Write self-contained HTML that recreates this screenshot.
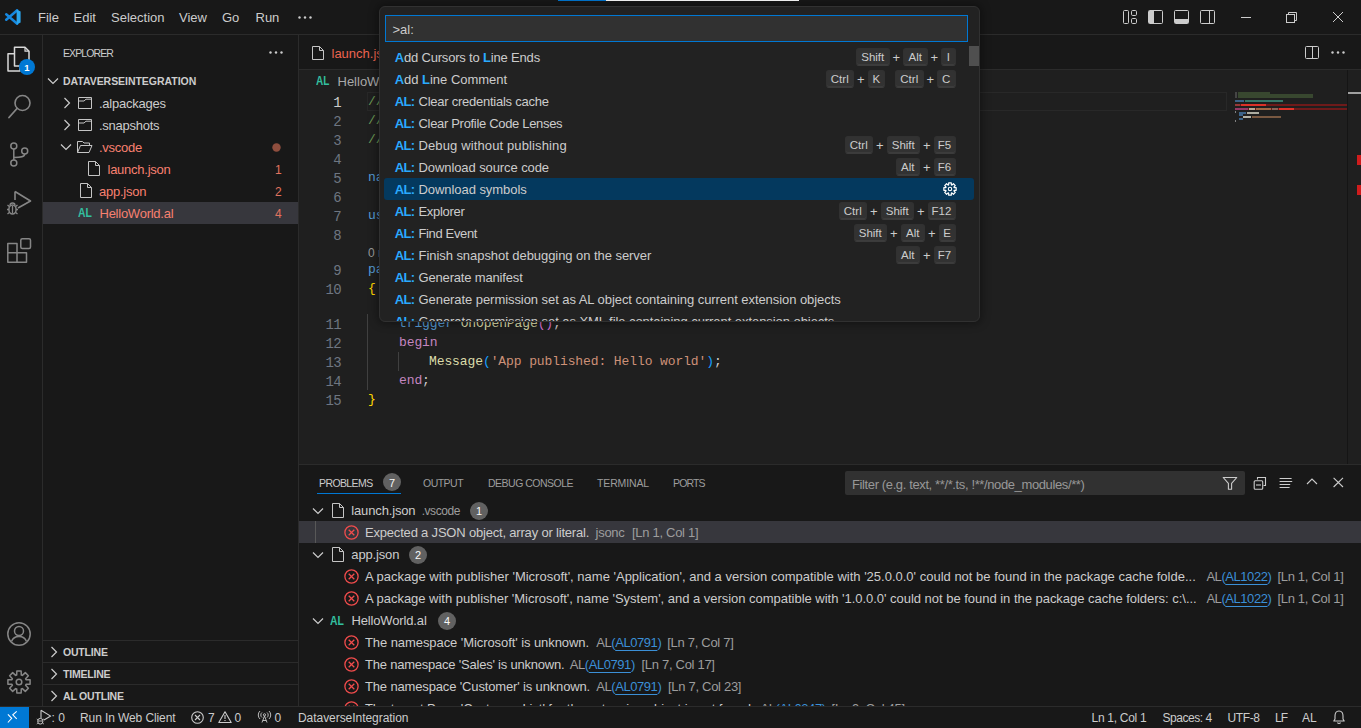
<!DOCTYPE html>
<html><head><meta charset="utf-8">
<style>
*{box-sizing:border-box;margin:0;padding:0}
html,body{width:1361px;height:728px;overflow:hidden;background:#181818;font-family:"Liberation Sans",sans-serif;color:#cccccc;font-size:13px;position:relative}
.a{position:absolute}
.t{position:absolute;white-space:pre;line-height:1}
svg{position:absolute;overflow:visible}
b{font-weight:700}
</style></head><body>
<div class="a" style="left:0px;top:0px;width:1361px;height:34px;background:#181818;"></div>
<div class="a" style="left:0px;top:34px;width:1361px;height:1px;background:#2b2b2b;"></div>
<div class="a" style="left:558px;top:0px;width:48px;height:1px;background:#0078d4;"></div>
<div class="a" style="left:606px;top:0px;width:193px;height:1px;background:#ffffff;"></div>
<svg style="left:5px;top:9px;" width="17" height="17" viewBox="0 0 17 17"><path d="M12.2 1.2 L1.2 10.8 M12.2 14.8 L1.2 5.2" stroke="#1688e0" stroke-width="2.5" stroke-linecap="round"/>
<path d="M11.6 0.4 L15.6 2.4 V13.6 L11.6 15.6 Z" fill="#2aa6ee"/></svg>
<div class="t" style="left:38px;top:11.0px;font-size:13px;color:#cccccc;font-weight:400;font-family:'Liberation Sans';">File</div>
<div class="t" style="left:73.5px;top:11.0px;font-size:13px;color:#cccccc;font-weight:400;font-family:'Liberation Sans';">Edit</div>
<div class="t" style="left:111px;top:11.0px;font-size:13px;color:#cccccc;font-weight:400;font-family:'Liberation Sans';">Selection</div>
<div class="t" style="left:179px;top:11.0px;font-size:13px;color:#cccccc;font-weight:400;font-family:'Liberation Sans';">View</div>
<div class="t" style="left:222px;top:11.0px;font-size:13px;color:#cccccc;font-weight:400;font-family:'Liberation Sans';">Go</div>
<div class="t" style="left:255.5px;top:11.0px;font-size:13px;color:#cccccc;font-weight:400;font-family:'Liberation Sans';">Run</div>
<svg style="left:298px;top:16px;" width="14" height="3" viewBox="0 0 14 3"><circle cx="1.5" cy="1.5" r="1.2" fill="#cccccc"/><circle cx="7" cy="1.5" r="1.2" fill="#cccccc"/><circle cx="12.5" cy="1.5" r="1.2" fill="#cccccc"/></svg>
<svg style="left:1123px;top:10px;" width="16" height="16" viewBox="0 0 16 16"><rect x="0.5" y="0.5" width="5" height="13" rx="1" fill="none" stroke="#cccccc"/><rect x="8.5" y="0.5" width="5" height="5" rx="1.2" fill="none" stroke="#cccccc"/><rect x="8.5" y="8.5" width="5" height="5" rx="1.2" fill="none" stroke="#cccccc"/></svg>
<svg style="left:1148px;top:10px;" width="16" height="16" viewBox="0 0 16 16"><rect x="0.5" y="0.5" width="14" height="13" rx="1" fill="none" stroke="#cccccc"/><rect x="1" y="1" width="5" height="12" fill="#cccccc"/></svg>
<svg style="left:1174px;top:10px;" width="16" height="16" viewBox="0 0 16 16"><rect x="0.5" y="0.5" width="14" height="13" rx="1" fill="none" stroke="#cccccc"/><rect x="1" y="9" width="13" height="4" fill="#cccccc"/></svg>
<svg style="left:1200px;top:10px;" width="16" height="16" viewBox="0 0 16 16"><rect x="0.5" y="0.5" width="14" height="13" rx="1" fill="none" stroke="#cccccc"/><line x1="9.5" y1="1" x2="9.5" y2="13" stroke="#cccccc"/></svg>
<div class="a" style="left:1241px;top:17px;width:10px;height:1px;background:#cccccc;"></div>
<svg style="left:1286px;top:12px;" width="11" height="11" viewBox="0 0 11 11"><rect x="0.5" y="2.5" width="8" height="8" fill="none" stroke="#cccccc"/><path d="M2.5 2.5 V0.5 H10.5 V8.5 H8.5" fill="none" stroke="#cccccc"/></svg>
<svg style="left:1333px;top:12px;" width="10" height="10" viewBox="0 0 10 10"><path d="M0 0 L10 10 M10 0 L0 10" stroke="#cccccc" stroke-width="1"/></svg>
<div class="a" style="left:42px;top:35px;width:1px;height:671px;background:#2b2b2b;"></div>
<svg style="left:7px;top:46px;" width="24" height="27" viewBox="0 0 24 27"><path d="M7.5 1.2 H18 L22 5.2 V20 H7.5 Z" fill="none" stroke="#d7d7d7" stroke-width="1.5" stroke-linejoin="round"/><path d="M18 1.2 V5.2 H22" fill="none" stroke="#d7d7d7" stroke-width="1.2"/><path d="M7.5 7.8 H1 V25 H13 V20" fill="none" stroke="#d7d7d7" stroke-width="1.5" stroke-linejoin="round"/></svg>
<svg style="left:19px;top:59px;" width="16" height="16" viewBox="0 0 16 16"><circle cx="8" cy="8" r="8" fill="#0078d4"/></svg>
<div class="t" style="left:24.2px;top:62.96px;font-size:9.5px;color:#ffffff;font-weight:700;font-family:'Liberation Sans';">1</div>
<svg style="left:8px;top:94px;" width="24" height="25" viewBox="0 0 24 25"><circle cx="14.5" cy="9" r="7.5" fill="none" stroke="#868686" stroke-width="1.6"/><path d="M9 14.5 L1 23.5" stroke="#868686" stroke-width="1.8" stroke-linecap="round"/></svg>
<svg style="left:9px;top:141px;" width="20" height="26" viewBox="0 0 20 26"><circle cx="4.8" cy="5" r="3" fill="none" stroke="#868686" stroke-width="1.5"/><circle cx="4.8" cy="22" r="3" fill="none" stroke="#868686" stroke-width="1.5"/><circle cx="15.7" cy="10" r="3" fill="none" stroke="#868686" stroke-width="1.5"/><path d="M4.8 8 V19 M15.7 13 C15.7 16 12 16.5 5 16.5" fill="none" stroke="#868686" stroke-width="1.5"/></svg>
<svg style="left:6px;top:190px;" width="26" height="27" viewBox="0 0 26 27"><path d="M9 1.5 V10 M9 1.5 L24.5 11 L12 18" fill="none" stroke="#868686" stroke-width="1.6" stroke-linejoin="round"/><ellipse cx="6.5" cy="19.5" rx="3.6" ry="4.5" fill="none" stroke="#868686" stroke-width="1.5"/><path d="M4 15.5 A2.5 2.5 0 0 1 9 15.5 M1 19.5 H3 M10 19.5 H12 M1.5 15 L3.3 16.5 M11.5 15 L9.7 16.5 M1.5 24 L3.3 22.5 M11.5 24 L9.7 22.5 M6.5 16 V23.5" fill="none" stroke="#868686" stroke-width="1.3"/></svg>
<svg style="left:7px;top:238px;" width="25" height="25" viewBox="0 0 25 25"><path d="M0.8 5.5 H10 V14.8 H19.5 V24.2 H0.8 Z M0.8 14.8 H10 V24.2" fill="none" stroke="#868686" stroke-width="1.5" stroke-linejoin="round"/><rect x="13.8" y="0.8" width="9.7" height="9.7" rx="1.5" fill="none" stroke="#868686" stroke-width="1.5"/></svg>
<svg style="left:7px;top:622px;" width="24" height="24" viewBox="0 0 24 24"><circle cx="12" cy="12" r="11.2" fill="none" stroke="#868686" stroke-width="1.5"/><circle cx="12" cy="9" r="4.5" fill="none" stroke="#868686" stroke-width="1.5"/><path d="M4.5 19.5 C6 15.5 9 14.5 12 14.5 C15 14.5 18 15.5 19.5 19.5" fill="none" stroke="#868686" stroke-width="1.5"/></svg>
<svg style="left:7px;top:670px;" width="24" height="24" viewBox="0 0 24 24"><path d="M19.04 9.71 L23.09 9.84 L23.09 14.16 L19.04 14.29 L18.59 15.36 L21.37 18.32 L18.32 21.37 L15.36 18.59 L14.29 19.04 L14.16 23.09 L9.84 23.09 L9.71 19.04 L8.64 18.59 L5.68 21.37 L2.63 18.32 L5.41 15.36 L4.96 14.29 L0.91 14.16 L0.91 9.84 L4.96 9.71 L5.41 8.64 L2.63 5.68 L5.68 2.63 L8.64 5.41 L9.71 4.96 L9.84 0.91 L14.16 0.91 L14.29 4.96 L15.36 5.41 L18.32 2.63 L21.37 5.68 L18.59 8.64 Z" fill="none" stroke="#868686" stroke-width="1.5" stroke-linejoin="round"/><circle cx="12" cy="12" r="2.8" fill="none" stroke="#868686" stroke-width="1.5"/></svg>
<div class="a" style="left:298px;top:35px;width:1px;height:671px;background:#2b2b2b;"></div>
<div class="t" style="left:63px;top:48.11px;font-size:10.5px;color:#cccccc;font-weight:400;font-family:'Liberation Sans';letter-spacing:-0.9px">EXPLORER</div>
<svg style="left:269px;top:51px;" width="14" height="3" viewBox="0 0 14 3"><circle cx="1.5" cy="1.5" r="1.2" fill="#cccccc"/><circle cx="7" cy="1.5" r="1.2" fill="#cccccc"/><circle cx="12.5" cy="1.5" r="1.2" fill="#cccccc"/></svg>
<svg style="left:47px;top:77px;" width="12" height="8" viewBox="0 0 12 8"><path d="M1 1.5 L6 6.5 L11 1.5" fill="none" stroke="#cccccc" stroke-width="1.2"/></svg>
<div class="t" style="left:63px;top:76.11px;font-size:10.5px;color:#cccccc;font-weight:700;font-family:'Liberation Sans';letter-spacing:-0.04px">DATAVERSEINTEGRATION</div>
<div class="a" style="left:43px;top:202px;width:255px;height:22px;background:#37373d;"></div>
<svg style="left:63px;top:97px;" width="8" height="12" viewBox="0 0 8 12"><path d="M1.5 1 L6.5 6 L1.5 11" fill="none" stroke="#cccccc" stroke-width="1.2"/></svg>
<svg style="left:78px;top:96px;" width="15" height="14" viewBox="0 0 15 14"><path d="M0.5 1.5 H13.5 V12.5 H0.5 Z M0.5 5 H6 L8 3.2 H13.5" fill="none" stroke="#c5c5c5" stroke-width="1" stroke-linejoin="round"/></svg>
<div class="t" style="left:99px;top:97.0px;font-size:13px;color:#cccccc;font-weight:400;font-family:'Liberation Sans';letter-spacing:-0.25px">.alpackages</div>
<svg style="left:63px;top:119px;" width="8" height="12" viewBox="0 0 8 12"><path d="M1.5 1 L6.5 6 L1.5 11" fill="none" stroke="#cccccc" stroke-width="1.2"/></svg>
<svg style="left:78px;top:118px;" width="15" height="14" viewBox="0 0 15 14"><path d="M0.5 1.5 H13.5 V12.5 H0.5 Z M0.5 5 H6 L8 3.2 H13.5" fill="none" stroke="#c5c5c5" stroke-width="1" stroke-linejoin="round"/></svg>
<div class="t" style="left:99px;top:119.0px;font-size:13px;color:#cccccc;font-weight:400;font-family:'Liberation Sans';letter-spacing:-0.25px">.snapshots</div>
<svg style="left:60px;top:143px;" width="12" height="8" viewBox="0 0 12 8"><path d="M1 1.5 L6 6.5 L11 1.5" fill="none" stroke="#cccccc" stroke-width="1.2"/></svg>
<svg style="left:77px;top:140px;" width="16" height="14" viewBox="0 0 16 14"><path d="M0.5 12.5 V1.5 H5.5 L7 3 H12.5 V5.5 M0.5 12.5 H12 L15 5.5 H3.5 L0.5 12.5" fill="none" stroke="#c5c5c5" stroke-width="1" stroke-linejoin="round"/></svg>
<div class="t" style="left:99px;top:141.0px;font-size:13px;color:#f88070;font-weight:400;font-family:'Liberation Sans';letter-spacing:-0.25px">.vscode</div>
<svg style="left:272px;top:143px;" width="10" height="10" viewBox="0 0 10 10"><circle cx="4.5" cy="4.5" r="4.2" fill="#8f4e3e"/></svg>
<svg style="left:88px;top:161px;" width="12" height="15" viewBox="0 0 12 15"><path d="M0.5 0.5 H7.5 L11.5 4.5 V14.5 H0.5 Z M7.5 0.5 V4.5 H11.5" fill="none" stroke="#c5c5c5" stroke-width="1" stroke-linejoin="round"/></svg>
<div class="t" style="left:107.5px;top:163.0px;font-size:13px;color:#f88070;font-weight:400;font-family:'Liberation Sans';letter-spacing:-0.25px">launch.json</div>
<div class="t" style="left:275px;top:163.84px;font-size:12px;color:#e0735f;font-weight:400;font-family:'Liberation Sans';">1</div>
<svg style="left:79.5px;top:183px;" width="12" height="15" viewBox="0 0 12 15"><path d="M0.5 0.5 H7.5 L11.5 4.5 V14.5 H0.5 Z M7.5 0.5 V4.5 H11.5" fill="none" stroke="#c5c5c5" stroke-width="1" stroke-linejoin="round"/></svg>
<div class="t" style="left:99px;top:185.0px;font-size:13px;color:#f88070;font-weight:400;font-family:'Liberation Sans';letter-spacing:-0.25px">app.json</div>
<div class="t" style="left:275px;top:185.84px;font-size:12px;color:#e0735f;font-weight:400;font-family:'Liberation Sans';">2</div>
<div class="t" style="left:78px;top:206.0px;font-size:13px;color:#33c0a0;font-weight:700;font-family:'Liberation Sans';transform:scaleX(0.8);transform-origin:0 0">AL</div>
<div class="t" style="left:99.5px;top:207.0px;font-size:13px;color:#f88070;font-weight:400;font-family:'Liberation Sans';letter-spacing:-0.25px">HelloWorld.al</div>
<div class="t" style="left:275px;top:207.84px;font-size:12px;color:#e0735f;font-weight:400;font-family:'Liberation Sans';">4</div>
<div class="a" style="left:43px;top:640px;width:255px;height:1px;background:#2b2b2b;"></div>
<div class="a" style="left:43px;top:662px;width:255px;height:1px;background:#2b2b2b;"></div>
<div class="a" style="left:43px;top:684px;width:255px;height:1px;background:#2b2b2b;"></div>
<svg style="left:50px;top:646px;" width="8" height="12" viewBox="0 0 8 12"><path d="M1.5 1 L6.5 6 L1.5 11" fill="none" stroke="#cccccc" stroke-width="1.2"/></svg>
<div class="t" style="left:63px;top:647.11px;font-size:10.5px;color:#cccccc;font-weight:700;font-family:'Liberation Sans';letter-spacing:-0.2px">OUTLINE</div>
<svg style="left:50px;top:668px;" width="8" height="12" viewBox="0 0 8 12"><path d="M1.5 1 L6.5 6 L1.5 11" fill="none" stroke="#cccccc" stroke-width="1.2"/></svg>
<div class="t" style="left:63px;top:669.11px;font-size:10.5px;color:#cccccc;font-weight:700;font-family:'Liberation Sans';letter-spacing:-0.2px">TIMELINE</div>
<svg style="left:50px;top:690px;" width="8" height="12" viewBox="0 0 8 12"><path d="M1.5 1 L6.5 6 L1.5 11" fill="none" stroke="#cccccc" stroke-width="1.2"/></svg>
<div class="t" style="left:63px;top:691.11px;font-size:10.5px;color:#cccccc;font-weight:700;font-family:'Liberation Sans';letter-spacing:-0.2px">AL OUTLINE</div>
<div class="a" style="left:299px;top:35px;width:1062px;height:34px;background:#181818;"></div>
<div class="a" style="left:299px;top:69px;width:1062px;height:1px;background:#2b2b2b;"></div>
<div class="a" style="left:299px;top:70px;width:1062px;height:394px;background:#1f1f1f;"></div>
<svg style="left:312px;top:46px;" width="12" height="15" viewBox="0 0 12 15"><path d="M0.5 0.5 H7.5 L11.5 4.5 V13.5 H0.5 Z M7.5 0.5 V4.5 H11.5" fill="none" stroke="#c5c5c5" stroke-width="1" stroke-linejoin="round"/></svg>
<div class="t" style="left:331.5px;top:47.0px;font-size:13px;color:#ec6450;font-weight:400;font-family:'Liberation Sans';">launch.json</div>
<div class="a" style="left:478px;top:35px;width:1px;height:34px;background:#2b2b2b;"></div>
<svg style="left:1305px;top:46px;" width="15" height="14" viewBox="0 0 15 14"><rect x="0.5" y="0.5" width="13" height="12" rx="1" fill="none" stroke="#cccccc"/><line x1="7.5" y1="1" x2="7.5" y2="12" stroke="#cccccc"/></svg>
<svg style="left:1331px;top:51px;" width="14" height="3" viewBox="0 0 14 3"><circle cx="1.5" cy="1.5" r="1.2" fill="#cccccc"/><circle cx="7" cy="1.5" r="1.2" fill="#cccccc"/><circle cx="12.5" cy="1.5" r="1.2" fill="#cccccc"/></svg>
<div class="t" style="left:316px;top:75.42px;font-size:12.5px;color:#33c0a0;font-weight:700;font-family:'Liberation Sans';transform:scaleX(0.8);transform-origin:0 0">AL</div>
<div class="t" style="left:337.5px;top:75.0px;font-size:13px;color:#a9a9a9;font-weight:400;font-family:'Liberation Sans';">HelloWorld.al</div>
<div class="a" style="left:367px;top:92px;width:860px;height:19px;background:transparent;border:1px solid #282828"></div>
<div class="t" style="left:333.3px;top:95.63px;font-size:14px;color:#cccccc;font-weight:400;font-family:'Liberation Mono';letter-spacing:-0.7px">1</div>
<div class="t" style="left:333.3px;top:114.63px;font-size:14px;color:#6e7681;font-weight:400;font-family:'Liberation Mono';letter-spacing:-0.7px">2</div>
<div class="t" style="left:333.3px;top:133.63px;font-size:14px;color:#6e7681;font-weight:400;font-family:'Liberation Mono';letter-spacing:-0.7px">3</div>
<div class="t" style="left:333.3px;top:152.63px;font-size:14px;color:#6e7681;font-weight:400;font-family:'Liberation Mono';letter-spacing:-0.7px">4</div>
<div class="t" style="left:333.3px;top:171.63px;font-size:14px;color:#6e7681;font-weight:400;font-family:'Liberation Mono';letter-spacing:-0.7px">5</div>
<div class="t" style="left:333.3px;top:190.63px;font-size:14px;color:#6e7681;font-weight:400;font-family:'Liberation Mono';letter-spacing:-0.7px">6</div>
<div class="t" style="left:333.3px;top:209.63px;font-size:14px;color:#6e7681;font-weight:400;font-family:'Liberation Mono';letter-spacing:-0.7px">7</div>
<div class="t" style="left:333.3px;top:228.63px;font-size:14px;color:#6e7681;font-weight:400;font-family:'Liberation Mono';letter-spacing:-0.7px">8</div>
<div class="t" style="left:333.3px;top:263.63px;font-size:14px;color:#6e7681;font-weight:400;font-family:'Liberation Mono';letter-spacing:-0.7px">9</div>
<div class="t" style="left:325.6px;top:282.63px;font-size:14px;color:#6e7681;font-weight:400;font-family:'Liberation Mono';letter-spacing:-0.7px">10</div>
<div class="t" style="left:325.6px;top:317.63px;font-size:14px;color:#6e7681;font-weight:400;font-family:'Liberation Mono';letter-spacing:-0.7px">11</div>
<div class="t" style="left:325.6px;top:336.63px;font-size:14px;color:#6e7681;font-weight:400;font-family:'Liberation Mono';letter-spacing:-0.7px">12</div>
<div class="t" style="left:325.6px;top:355.63px;font-size:14px;color:#6e7681;font-weight:400;font-family:'Liberation Mono';letter-spacing:-0.7px">13</div>
<div class="t" style="left:325.6px;top:374.63px;font-size:14px;color:#6e7681;font-weight:400;font-family:'Liberation Mono';letter-spacing:-0.7px">14</div>
<div class="t" style="left:325.6px;top:393.63px;font-size:14px;color:#6e7681;font-weight:400;font-family:'Liberation Mono';letter-spacing:-0.7px">15</div>
<div class="t" style="left:368px;top:95.36px;font-family:'Liberation Mono';font-size:13px;letter-spacing:-0.1px"><span style="color:#6a9955">// Welcome to your new AL extension.</span></div>
<div class="t" style="left:368px;top:114.36px;font-family:'Liberation Mono';font-size:13px;letter-spacing:-0.1px"><span style="color:#6a9955">// Remember that object names and IDs should be unique across all extensions.</span></div>
<div class="t" style="left:368px;top:133.36px;font-family:'Liberation Mono';font-size:13px;letter-spacing:-0.1px"><span style="color:#6a9955">// AL snippets start with t*, like tpageext - give them a try and happy coding!</span></div>
<div class="t" style="left:368px;top:171.36px;font-family:'Liberation Mono';font-size:13px;letter-spacing:-0.1px"><span style="color:#569cd6">namespace</span> DefaultPublisher.DataverseIntegration;</div>
<div class="t" style="left:368px;top:209.36px;font-family:'Liberation Mono';font-size:13px;letter-spacing:-0.1px"><span style="color:#569cd6">using</span> Microsoft.Sales.Customer;</div>
<div class="t" style="left:368px;top:246.84px;font-size:12px;color:#999999;font-weight:400;font-family:'Liberation Sans';">0 references</div>
<div class="t" style="left:368px;top:263.36px;font-family:'Liberation Mono';font-size:13px;letter-spacing:-0.1px"><span style="color:#569cd6">pageextension</span> 50000 CustomerListExt extends "Customer List"</div>
<div class="t" style="left:368px;top:282.36px;font-family:'Liberation Mono';font-size:13px;letter-spacing:-0.1px"><span style="color:#ffd700">{</span></div>
<div class="t" style="left:399px;top:317.36px;font-family:'Liberation Mono';font-size:13px;letter-spacing:-0.1px"><span style="color:#569cd6">trigger</span> <span style="color:#dcdcaa">OnOpenPage</span><span style="color:#da70d6">()</span>;</div>
<div class="t" style="left:399px;top:336.36px;font-family:'Liberation Mono';font-size:13px;letter-spacing:-0.1px"><span style="color:#c586c0">begin</span></div>
<div class="t" style="left:429px;top:355.36px;font-family:'Liberation Mono';font-size:13px;letter-spacing:-0.1px"><span style="color:#dcdcaa">Message</span><span style="color:#179fff">(</span><span style="color:#ce9178">'App published: Hello world'</span><span style="color:#179fff">)</span>;</div>
<div class="t" style="left:399px;top:374.36px;font-family:'Liberation Mono';font-size:13px;letter-spacing:-0.1px"><span style="color:#c586c0">end</span>;</div>
<div class="t" style="left:368px;top:393.36px;font-family:'Liberation Mono';font-size:13px;letter-spacing:-0.1px"><span style="color:#ffd700">}</span></div>
<div class="a" style="left:367px;top:314px;width:1px;height:76px;background:#404040;"></div>
<div class="a" style="left:398px;top:352px;width:1px;height:19px;background:#404040;"></div>
<div class="a" style="left:1235.3px;top:92px;width:1.5px;height:6px;background:#555555;opacity:0.7"></div>
<div class="a" style="left:1238px;top:92px;width:32px;height:1.5px;background:#5b7f45;opacity:0.42"></div>
<div class="a" style="left:1238px;top:94.2px;width:75px;height:1.5px;background:#5b7f45;opacity:0.42"></div>
<div class="a" style="left:1238px;top:96.2px;width:75px;height:1.5px;background:#5b7f45;opacity:0.42"></div>
<div class="a" style="left:1235.3px;top:100px;width:9px;height:1.8px;background:#3f6a94;opacity:0.9"></div>
<div class="a" style="left:1245px;top:100px;width:38px;height:1.8px;background:#3d8c7a;opacity:0.8"></div>
<div class="a" style="left:1235.3px;top:104px;width:111.7px;height:2.3px;background:#6e1a1a;opacity:1.0"></div>
<div class="a" style="left:1235.3px;top:104px;width:5px;height:2.3px;background:#a04040;opacity:0.8"></div>
<div class="a" style="left:1241px;top:104px;width:25px;height:2.3px;background:#e8342a;opacity:0.9"></div>
<div class="a" style="left:1235.3px;top:108px;width:111.7px;height:2.2px;background:#6e1a1a;opacity:1.0"></div>
<div class="a" style="left:1235.3px;top:108px;width:13px;height:2.2px;background:#a0407a;opacity:0.8"></div>
<div class="a" style="left:1249px;top:108px;width:6px;height:2.2px;background:#d0c8b0;opacity:0.8"></div>
<div class="a" style="left:1256px;top:108px;width:15px;height:2.2px;background:#b07a50;opacity:0.8"></div>
<div class="a" style="left:1272px;top:108px;width:6px;height:2.2px;background:#9a8070;opacity:0.7"></div>
<div class="a" style="left:1279px;top:108px;width:15px;height:2.2px;background:#e8342a;opacity:0.95"></div>
<div class="a" style="left:1235.3px;top:110.5px;width:1px;height:2px;background:#aaaaaa;opacity:0.7"></div>
<div class="a" style="left:1239px;top:112px;width:7px;height:1.6px;background:#3f6a94;opacity:0.9"></div>
<div class="a" style="left:1247px;top:112px;width:12px;height:1.6px;background:#cfcfc0;opacity:0.8"></div>
<div class="a" style="left:1239px;top:114px;width:4px;height:1.6px;background:#3f6a94;opacity:0.9"></div>
<div class="a" style="left:1243px;top:116px;width:8px;height:1.6px;background:#d8d8c8;opacity:0.8"></div>
<div class="a" style="left:1252px;top:116px;width:29px;height:1.6px;background:#a07050;opacity:0.7"></div>
<div class="a" style="left:1239px;top:118px;width:4px;height:1.6px;background:#3f6a94;opacity:0.9"></div>
<div class="a" style="left:1235.3px;top:120px;width:1px;height:2px;background:#aaaaaa;opacity:0.7"></div>
<div class="a" style="left:1347px;top:70px;width:1px;height:394px;background:#151515;"></div>
<div class="a" style="left:1348px;top:92.3px;width:13px;height:1.7px;background:#a0a0a0;"></div>
<div class="a" style="left:1357px;top:155px;width:4px;height:10px;background:#d01c1c;"></div>
<div class="a" style="left:1357px;top:185px;width:4px;height:10px;background:#d01c1c;"></div>
<div class="a" style="left:299px;top:464px;width:1062px;height:1px;background:#2b2b2b;"></div>
<div class="t" style="left:319px;top:478.11px;font-size:10.5px;color:#cccccc;font-weight:400;font-family:'Liberation Sans';letter-spacing:-0.6px">PROBLEMS</div>
<div class="t" style="left:423px;top:478.11px;font-size:10.5px;color:#9d9d9d;font-weight:400;font-family:'Liberation Sans';letter-spacing:-0.52px">OUTPUT</div>
<div class="t" style="left:488px;top:478.11px;font-size:10.5px;color:#9d9d9d;font-weight:400;font-family:'Liberation Sans';letter-spacing:-0.5px">DEBUG CONSOLE</div>
<div class="t" style="left:597px;top:478.11px;font-size:10.5px;color:#9d9d9d;font-weight:400;font-family:'Liberation Sans';letter-spacing:-0.14px">TERMINAL</div>
<div class="t" style="left:673px;top:478.11px;font-size:10.5px;color:#9d9d9d;font-weight:400;font-family:'Liberation Sans';letter-spacing:-0.85px">PORTS</div>
<svg style="left:383px;top:473px;" width="18" height="18" viewBox="0 0 18 18"><circle cx="9" cy="9" r="9" fill="#616161"/></svg>
<div class="t" style="left:389px;top:477.69px;font-size:11px;color:#f8f8f8;font-weight:400;font-family:'Liberation Sans';">7</div>
<div class="a" style="left:317px;top:493px;width:84px;height:1px;background:#0078d4;"></div>
<div class="a" style="left:845px;top:471px;width:400px;height:24px;background:#313131;border-radius:2px"></div>
<div class="t" style="left:852px;top:478.0px;font-size:13px;color:#989898;font-weight:400;font-family:'Liberation Sans';letter-spacing:-0.38px">Filter (e.g. text, **/*.ts, !**/node_modules/**)</div>
<svg style="left:1222px;top:476px;" width="16" height="14" viewBox="0 0 16 14"><path d="M1.2 1.5 H14.8 L9.6 7.3 V13.3 H6.4 V7.3 Z" fill="none" stroke="#cccccc" stroke-width="1.1" stroke-linejoin="round"/></svg>
<svg style="left:1253px;top:476px;" width="14" height="14" viewBox="0 0 14 14"><path d="M4.5 3.5 V1.5 H12.5 V9.5 H10.5" fill="none" stroke="#cccccc" stroke-width="1.1"/><rect x="1.2" y="4.8" width="8.5" height="8.5" rx="1" fill="none" stroke="#cccccc" stroke-width="1.1"/><path d="M3 9 H8" stroke="#cccccc" stroke-width="1.1"/></svg>
<svg style="left:1279px;top:477px;" width="14" height="12" viewBox="0 0 14 12"><path d="M0.6 1.5 H12.6 M0.6 4.5 H13.2 M0.6 7.5 H11.2 M0.6 10.5 H10.6" stroke="#cccccc" stroke-width="1.1"/></svg>
<svg style="left:1306px;top:478px;" width="12" height="7" viewBox="0 0 12 7"><path d="M1 6 L6 1 L11 6" fill="none" stroke="#cccccc" stroke-width="1.1"/></svg>
<svg style="left:1333px;top:477px;" width="11" height="11" viewBox="0 0 11 11"><path d="M0.6 0.8 L10 10 M10 0.8 L0.6 10" stroke="#cccccc" stroke-width="1.1"/></svg>
<div class="a" style="left:299px;top:499px;width:1062px;height:207px;overflow:hidden"><div class="a" style="left:-299px;top:-499px;width:1361px;height:728px">
<svg style="left:312px;top:507px;" width="12" height="8" viewBox="0 0 12 8"><path d="M1 1.5 L6 6.5 L11 1.5" fill="none" stroke="#cccccc" stroke-width="1.2"/></svg>
<svg style="left:332px;top:503px;" width="12" height="15" viewBox="0 0 12 15"><path d="M0.5 0.5 H7.5 L11.5 4.5 V14.5 H0.5 Z M7.5 0.5 V4.5 H11.5" fill="none" stroke="#c5c5c5" stroke-width="1" stroke-linejoin="round"/></svg>
<div class="t" style="left:351.3px;top:504.0px;font-size:13px;color:#cccccc;font-weight:400;font-family:'Liberation Sans';letter-spacing:-0.15px">launch.json</div>
<div class="t" style="left:421.7px;top:504.84px;font-size:12px;color:#9d9d9d;font-weight:400;font-family:'Liberation Sans';letter-spacing:-0.45px">.vscode</div>
<svg style="left:470px;top:502px;" width="18" height="18" viewBox="0 0 18 18"><circle cx="9" cy="9" r="9" fill="#616161"/></svg>
<div class="t" style="left:476px;top:506.19px;font-size:11px;color:#f8f8f8;font-weight:400;font-family:'Liberation Sans';">1</div>
<div class="a" style="left:299px;top:521px;width:1062px;height:22px;background:#37373d;"></div>
<div class="a" style="left:315px;top:521px;width:1px;height:22px;background:#585858;"></div>
<svg style="left:344px;top:525px;" width="15" height="15" viewBox="0 0 15 15"><circle cx="7.5" cy="7.5" r="6.6" fill="none" stroke="#f14c4c" stroke-width="1.3"/><path d="M4.7 4.7 L10.3 10.3 M10.3 4.7 L4.7 10.3" stroke="#f14c4c" stroke-width="1.3"/></svg>
<div class="t" style="left:365px;top:526.0px;font-size:13px;color:#cccccc;font-weight:400;font-family:'Liberation Sans';letter-spacing:-0.19px">Expected a JSON object, array or literal.</div>
<div class="t" style="left:595.5px;top:526.0px;font-size:13px;color:#9d9d9d;font-weight:400;font-family:'Liberation Sans';letter-spacing:-0.25px">jsonc</div>
<div class="t" style="left:632px;top:526.0px;font-size:13px;color:#9d9d9d;font-weight:400;font-family:'Liberation Sans';letter-spacing:-0.3px">[Ln 1, Col 1]</div>
<svg style="left:312px;top:551px;" width="12" height="8" viewBox="0 0 12 8"><path d="M1 1.5 L6 6.5 L11 1.5" fill="none" stroke="#cccccc" stroke-width="1.2"/></svg>
<svg style="left:332px;top:547px;" width="12" height="15" viewBox="0 0 12 15"><path d="M0.5 0.5 H7.5 L11.5 4.5 V14.5 H0.5 Z M7.5 0.5 V4.5 H11.5" fill="none" stroke="#c5c5c5" stroke-width="1" stroke-linejoin="round"/></svg>
<div class="t" style="left:351.3px;top:548.0px;font-size:13px;color:#cccccc;font-weight:400;font-family:'Liberation Sans';letter-spacing:-0.15px">app.json</div>
<svg style="left:409px;top:546px;" width="18" height="18" viewBox="0 0 18 18"><circle cx="9" cy="9" r="9" fill="#616161"/></svg>
<div class="t" style="left:415px;top:550.19px;font-size:11px;color:#f8f8f8;font-weight:400;font-family:'Liberation Sans';">2</div>
<svg style="left:344px;top:569px;" width="15" height="15" viewBox="0 0 15 15"><circle cx="7.5" cy="7.5" r="6.6" fill="none" stroke="#f14c4c" stroke-width="1.3"/><path d="M4.7 4.7 L10.3 10.3 M10.3 4.7 L4.7 10.3" stroke="#f14c4c" stroke-width="1.3"/></svg>
<div class="t" style="left:365px;top:570.0px;font-size:13px;color:#cccccc;font-weight:400;font-family:'Liberation Sans';letter-spacing:0px">A package with publisher 'Microsoft', name 'Application', and a version compatible with '25.0.0.0' could not be found in the package cache folde...</div>
<div class="t" style="left:1206.4px;top:570.0px;font-size:13px;color:#9d9d9d;font-weight:400;font-family:'Liberation Sans';letter-spacing:-0.44px">AL<span style="color:#3b8fd6">(<span style="text-decoration:underline;text-underline-offset:2.5px">AL1022</span>)</span></div>
<div class="t" style="left:1277.4px;top:570.0px;font-size:13px;color:#9d9d9d;font-weight:400;font-family:'Liberation Sans';letter-spacing:-0.3px">[Ln 1, Col 1]</div>
<svg style="left:344px;top:591px;" width="15" height="15" viewBox="0 0 15 15"><circle cx="7.5" cy="7.5" r="6.6" fill="none" stroke="#f14c4c" stroke-width="1.3"/><path d="M4.7 4.7 L10.3 10.3 M10.3 4.7 L4.7 10.3" stroke="#f14c4c" stroke-width="1.3"/></svg>
<div class="t" style="left:365px;top:592.0px;font-size:13px;color:#cccccc;font-weight:400;font-family:'Liberation Sans';letter-spacing:-0.023px">A package with publisher 'Microsoft', name 'System', and a version compatible with '1.0.0.0' could not be found in the package cache folders: c:\...</div>
<div class="t" style="left:1206.4px;top:592.0px;font-size:13px;color:#9d9d9d;font-weight:400;font-family:'Liberation Sans';letter-spacing:-0.44px">AL<span style="color:#3b8fd6">(<span style="text-decoration:underline;text-underline-offset:2.5px">AL1022</span>)</span></div>
<div class="t" style="left:1277.4px;top:592.0px;font-size:13px;color:#9d9d9d;font-weight:400;font-family:'Liberation Sans';letter-spacing:-0.3px">[Ln 1, Col 1]</div>
<svg style="left:312px;top:617px;" width="12" height="8" viewBox="0 0 12 8"><path d="M1 1.5 L6 6.5 L11 1.5" fill="none" stroke="#cccccc" stroke-width="1.2"/></svg>
<div class="t" style="left:330px;top:614.0px;font-size:13px;color:#33c0a0;font-weight:700;font-family:'Liberation Sans';transform:scaleX(0.8);transform-origin:0 0">AL</div>
<div class="t" style="left:351.5px;top:614.0px;font-size:13px;color:#cccccc;font-weight:400;font-family:'Liberation Sans';letter-spacing:-0.15px">HelloWorld.al</div>
<svg style="left:438px;top:612px;" width="18" height="18" viewBox="0 0 18 18"><circle cx="9" cy="9" r="9" fill="#616161"/></svg>
<div class="t" style="left:444px;top:616.19px;font-size:11px;color:#f8f8f8;font-weight:400;font-family:'Liberation Sans';">4</div>
<svg style="left:344px;top:635px;" width="15" height="15" viewBox="0 0 15 15"><circle cx="7.5" cy="7.5" r="6.6" fill="none" stroke="#f14c4c" stroke-width="1.3"/><path d="M4.7 4.7 L10.3 10.3 M10.3 4.7 L4.7 10.3" stroke="#f14c4c" stroke-width="1.3"/></svg>
<div class="t" style="left:365px;top:636.0px;font-size:13px;color:#cccccc;font-weight:400;font-family:'Liberation Sans';letter-spacing:-0.076px">The namespace 'Microsoft' is unknown.</div>
<div class="t" style="left:596.3px;top:636.0px;font-size:13px;color:#9d9d9d;font-weight:400;font-family:'Liberation Sans';letter-spacing:-0.44px">AL<span style="color:#3b8fd6">(<span style="text-decoration:underline;text-underline-offset:2.5px">AL0791</span>)</span></div>
<div class="t" style="left:667.3px;top:636.0px;font-size:13px;color:#9d9d9d;font-weight:400;font-family:'Liberation Sans';letter-spacing:-0.3px">[Ln 7, Col 7]</div>
<svg style="left:344px;top:657px;" width="15" height="15" viewBox="0 0 15 15"><circle cx="7.5" cy="7.5" r="6.6" fill="none" stroke="#f14c4c" stroke-width="1.3"/><path d="M4.7 4.7 L10.3 10.3 M10.3 4.7 L4.7 10.3" stroke="#f14c4c" stroke-width="1.3"/></svg>
<div class="t" style="left:365px;top:658.0px;font-size:13px;color:#cccccc;font-weight:400;font-family:'Liberation Sans';letter-spacing:-0.22px">The namespace 'Sales' is unknown.</div>
<div class="t" style="left:569.8px;top:658.0px;font-size:13px;color:#9d9d9d;font-weight:400;font-family:'Liberation Sans';letter-spacing:-0.44px">AL<span style="color:#3b8fd6">(<span style="text-decoration:underline;text-underline-offset:2.5px">AL0791</span>)</span></div>
<div class="t" style="left:641.5px;top:658.0px;font-size:13px;color:#9d9d9d;font-weight:400;font-family:'Liberation Sans';letter-spacing:-0.3px">[Ln 7, Col 17]</div>
<svg style="left:344px;top:679px;" width="15" height="15" viewBox="0 0 15 15"><circle cx="7.5" cy="7.5" r="6.6" fill="none" stroke="#f14c4c" stroke-width="1.3"/><path d="M4.7 4.7 L10.3 10.3 M10.3 4.7 L4.7 10.3" stroke="#f14c4c" stroke-width="1.3"/></svg>
<div class="t" style="left:365px;top:680.0px;font-size:13px;color:#cccccc;font-weight:400;font-family:'Liberation Sans';letter-spacing:-0.15px">The namespace 'Customer' is unknown.</div>
<div class="t" style="left:596.3px;top:680.0px;font-size:13px;color:#9d9d9d;font-weight:400;font-family:'Liberation Sans';letter-spacing:-0.44px">AL<span style="color:#3b8fd6">(<span style="text-decoration:underline;text-underline-offset:2.5px">AL0791</span>)</span></div>
<div class="t" style="left:668px;top:680.0px;font-size:13px;color:#9d9d9d;font-weight:400;font-family:'Liberation Sans';letter-spacing:-0.3px">[Ln 7, Col 23]</div>
<svg style="left:344px;top:701px;" width="15" height="15" viewBox="0 0 15 15"><circle cx="7.5" cy="7.5" r="6.6" fill="none" stroke="#f14c4c" stroke-width="1.3"/><path d="M4.7 4.7 L10.3 10.3 M10.3 4.7 L4.7 10.3" stroke="#f14c4c" stroke-width="1.3"/></svg>
<div class="t" style="left:365px;top:702.00px;font-size:13px;color:#cccccc;letter-spacing:-0.07px">The target Page 'Customer List' for the extension object is not found.<span style="margin-left:6px;color:#9d9d9d;letter-spacing:-0.44px">AL<span style="color:#3b8fd6">(<span style="text-decoration:underline;text-underline-offset:2.5px">AL0247</span>)</span></span><span style="margin-left:6px;color:#9d9d9d;letter-spacing:-0.3px">[Ln 9, Col 45]</span></div>
</div></div>
<div class="a" style="left:0px;top:706px;width:1361px;height:1px;background:#2b2b2b;"></div>
<div class="a" style="left:0px;top:707px;width:29px;height:21px;background:#0078d4;"></div>
<svg style="left:0px;top:706px;" width="29" height="22" viewBox="0 0 29 22"><path d="M7.9 8.4 L11.7 12.3 L7.9 16.5 M16.7 5.3 L12.8 8.8 L16.7 12.8" fill="none" stroke="#ffffff" stroke-width="1.1"/></svg>
<svg style="left:36px;top:709px;" width="16" height="16" viewBox="0 0 16 16"><path d="M5 1.3 V9 M5 1.3 L14.7 7.1 L8 11" fill="none" stroke="#cccccc" stroke-width="1.1" stroke-linejoin="round"/><rect x="1.8" y="9.5" width="5" height="5.5" rx="2.2" fill="none" stroke="#cccccc" stroke-width="1"/><path d="M1.8 12 H6.8 M0.8 10 L1.8 10.8 M7.8 10 L6.8 10.8 M0.8 15 L1.8 14.2 M7.8 15 L6.8 14.2" stroke="#cccccc" stroke-width="0.9"/></svg>
<div class="t" style="left:51.5px;top:711.84px;font-size:12px;color:#cccccc;font-weight:400;font-family:'Liberation Sans';">: 0</div>
<div class="t" style="left:80px;top:711.84px;font-size:12px;color:#cccccc;font-weight:400;font-family:'Liberation Sans';letter-spacing:-0.1px">Run In Web Client</div>
<svg style="left:191px;top:711px;" width="13" height="13" viewBox="0 0 13 13"><circle cx="6.5" cy="6.5" r="5.8" fill="none" stroke="#cccccc" stroke-width="1.1"/><path d="M4 4 L9 9 M9 4 L4 9" stroke="#cccccc" stroke-width="1.1"/></svg>
<div class="t" style="left:208px;top:711.84px;font-size:12px;color:#cccccc;font-weight:400;font-family:'Liberation Sans';">7</div>
<svg style="left:218px;top:711px;" width="14" height="12" viewBox="0 0 14 12"><path d="M7 0.8 L13.2 11.5 H0.8 Z M7 4 V8 M7 9 V10" fill="none" stroke="#cccccc" stroke-width="1.1" stroke-linejoin="round"/></svg>
<div class="t" style="left:234.5px;top:711.84px;font-size:12px;color:#cccccc;font-weight:400;font-family:'Liberation Sans';">0</div>
<svg style="left:258px;top:710px;" width="13" height="13" viewBox="0 0 13 13"><circle cx="6.5" cy="4.8" r="1.1" fill="none" stroke="#cccccc" stroke-width="0.9"/><path d="M6.5 6 L4 12.5 M6.5 6 L9 12.5 M4.8 10.5 H8.2 M4 2.5 A3.2 3.2 0 0 0 4 7.5 M9 2.5 A3.2 3.2 0 0 1 9 7.5 M2 1 A5.5 5.5 0 0 0 2 9 M11 1 A5.5 5.5 0 0 1 11 9" fill="none" stroke="#cccccc" stroke-width="0.9"/></svg>
<div class="t" style="left:274.5px;top:711.84px;font-size:12px;color:#cccccc;font-weight:400;font-family:'Liberation Sans';">0</div>
<div class="t" style="left:298px;top:711.84px;font-size:12px;color:#cccccc;font-weight:400;font-family:'Liberation Sans';letter-spacing:-0.05px">DataverseIntegration</div>
<div class="t" style="left:1091.5px;top:711.84px;font-size:12px;color:#cccccc;font-weight:400;font-family:'Liberation Sans';letter-spacing:-0.29px">Ln 1, Col 1</div>
<div class="t" style="left:1162.5px;top:711.84px;font-size:12px;color:#cccccc;font-weight:400;font-family:'Liberation Sans';letter-spacing:-0.45px">Spaces: 4</div>
<div class="t" style="left:1227.5px;top:711.84px;font-size:12px;color:#cccccc;font-weight:400;font-family:'Liberation Sans';letter-spacing:-0.4px">UTF-8</div>
<div class="t" style="left:1275px;top:711.84px;font-size:12px;color:#cccccc;font-weight:400;font-family:'Liberation Sans';letter-spacing:-1px">LF</div>
<div class="t" style="left:1302px;top:711.84px;font-size:12px;color:#cccccc;font-weight:400;font-family:'Liberation Sans';">AL</div>
<svg style="left:1333px;top:710px;" width="12" height="14" viewBox="0 0 12 14"><path d="M6 1 C3 1 2 3.5 2 6 V9 L0.8 11 H11.2 L10 9 V6 C10 3.5 9 1 6 1 Z M4.5 12.5 A1.6 1.6 0 0 0 7.5 12.5" fill="none" stroke="#cccccc" stroke-width="1.1" stroke-linejoin="round"/></svg>
<div class="a" style="left:379px;top:6px;width:601px;height:316px;background:#222222;border:1px solid #313131;border-radius:6px;box-shadow:0 0 8px 2px rgba(0,0,0,0.36)"></div>
<div class="a" style="left:385px;top:15px;width:583px;height:27px;background:#313131;border:1px solid #0078d4"></div>
<div class="t" style="left:392.5px;top:23.0px;font-size:13px;color:#cccccc;font-weight:400;font-family:'Liberation Sans';">&gt;al:</div>
<div class="a" style="left:969px;top:46px;width:10px;height:20px;background:#4f4f4f;"></div>
<div class="a" style="left:384px;top:178px;width:590px;height:22px;background:#04395e;border-radius:3px"></div>
<div class="a" style="left:380px;top:46px;width:599px;height:275px;overflow:hidden">
<div class="a" style="left:-380px;top:-46px;width:1361px;height:728px">
<div class="t" style="left:394.7px;top:51.0px;font-size:13px;color:#cccccc;font-weight:400;font-family:'Liberation Sans';letter-spacing:-0.18px"><b style="color:#2aaaff">A</b>dd Cursors to <b style="color:#2aaaff">L</b>ine Ends</div>
<div class="a" style="left:941.0px;top:48px;width:14.5px;height:17.5px;background:rgba(128,128,128,0.17);border:1px solid rgba(51,51,51,0.6);border-bottom-color:rgba(68,68,68,0.6);border-radius:3px;box-shadow:inset 0 -1px 0 rgba(68,68,68,0.6)"></div>
<div class="t" style="left:941.0px;width:14.5px;text-align:center;top:51.77px;font-size:11.5px;color:#cccccc">I</div>
<div class="t" style="left:930.5px;top:51.0px;font-size:13px;color:#cccccc;font-weight:400;font-family:'Liberation Sans';">+</div>
<div class="a" style="left:903.0px;top:48px;width:24.5px;height:17.5px;background:rgba(128,128,128,0.17);border:1px solid rgba(51,51,51,0.6);border-bottom-color:rgba(68,68,68,0.6);border-radius:3px;box-shadow:inset 0 -1px 0 rgba(68,68,68,0.6)"></div>
<div class="t" style="left:903.0px;width:24.5px;text-align:center;top:51.77px;font-size:11.5px;color:#cccccc">Alt</div>
<div class="t" style="left:892.5px;top:51.0px;font-size:13px;color:#cccccc;font-weight:400;font-family:'Liberation Sans';">+</div>
<div class="a" style="left:856.0px;top:48px;width:33.5px;height:17.5px;background:rgba(128,128,128,0.17);border:1px solid rgba(51,51,51,0.6);border-bottom-color:rgba(68,68,68,0.6);border-radius:3px;box-shadow:inset 0 -1px 0 rgba(68,68,68,0.6)"></div>
<div class="t" style="left:856.0px;width:33.5px;text-align:center;top:51.77px;font-size:11.5px;color:#cccccc">Shift</div>
<div class="t" style="left:394.7px;top:73.0px;font-size:13px;color:#cccccc;font-weight:400;font-family:'Liberation Sans';letter-spacing:-0.02px"><b style="color:#2aaaff">A</b>dd <b style="color:#2aaaff">L</b>ine Comment</div>
<div class="a" style="left:937.0px;top:70px;width:18.5px;height:17.5px;background:rgba(128,128,128,0.17);border:1px solid rgba(51,51,51,0.6);border-bottom-color:rgba(68,68,68,0.6);border-radius:3px;box-shadow:inset 0 -1px 0 rgba(68,68,68,0.6)"></div>
<div class="t" style="left:937.0px;width:18.5px;text-align:center;top:73.77px;font-size:11.5px;color:#cccccc">C</div>
<div class="t" style="left:926.5px;top:73.0px;font-size:13px;color:#cccccc;font-weight:400;font-family:'Liberation Sans';">+</div>
<div class="a" style="left:895.0px;top:70px;width:28.5px;height:17.5px;background:rgba(128,128,128,0.17);border:1px solid rgba(51,51,51,0.6);border-bottom-color:rgba(68,68,68,0.6);border-radius:3px;box-shadow:inset 0 -1px 0 rgba(68,68,68,0.6)"></div>
<div class="t" style="left:895.0px;width:28.5px;text-align:center;top:73.77px;font-size:11.5px;color:#cccccc">Ctrl</div>
<div class="a" style="left:867.5px;top:70px;width:17.5px;height:17.5px;background:rgba(128,128,128,0.17);border:1px solid rgba(51,51,51,0.6);border-bottom-color:rgba(68,68,68,0.6);border-radius:3px;box-shadow:inset 0 -1px 0 rgba(68,68,68,0.6)"></div>
<div class="t" style="left:867.5px;width:17.5px;text-align:center;top:73.77px;font-size:11.5px;color:#cccccc">K</div>
<div class="t" style="left:857.0px;top:73.0px;font-size:13px;color:#cccccc;font-weight:400;font-family:'Liberation Sans';">+</div>
<div class="a" style="left:825.5px;top:70px;width:28.5px;height:17.5px;background:rgba(128,128,128,0.17);border:1px solid rgba(51,51,51,0.6);border-bottom-color:rgba(68,68,68,0.6);border-radius:3px;box-shadow:inset 0 -1px 0 rgba(68,68,68,0.6)"></div>
<div class="t" style="left:825.5px;width:28.5px;text-align:center;top:73.77px;font-size:11.5px;color:#cccccc">Ctrl</div>
<div class="t" style="left:394.7px;top:95.0px;font-size:13px;color:#cccccc;font-weight:400;font-family:'Liberation Sans';letter-spacing:-0.6px"><b style="color:#2aaaff">AL:</b></div>
<div class="t" style="left:418.5px;top:95.0px;font-size:13px;color:#cccccc;font-weight:400;font-family:'Liberation Sans';letter-spacing:-0.246px">Clear credentials cache</div>
<div class="t" style="left:394.7px;top:117.0px;font-size:13px;color:#cccccc;font-weight:400;font-family:'Liberation Sans';letter-spacing:-0.6px"><b style="color:#2aaaff">AL:</b></div>
<div class="t" style="left:418.5px;top:117.0px;font-size:13px;color:#cccccc;font-weight:400;font-family:'Liberation Sans';letter-spacing:-0.318px">Clear Profile Code Lenses</div>
<div class="t" style="left:394.7px;top:139.0px;font-size:13px;color:#cccccc;font-weight:400;font-family:'Liberation Sans';letter-spacing:-0.6px"><b style="color:#2aaaff">AL:</b></div>
<div class="t" style="left:418.5px;top:139.0px;font-size:13px;color:#cccccc;font-weight:400;font-family:'Liberation Sans';letter-spacing:0.126px">Debug without publishing</div>
<div class="a" style="left:933.5px;top:136px;width:22px;height:17.5px;background:rgba(128,128,128,0.17);border:1px solid rgba(51,51,51,0.6);border-bottom-color:rgba(68,68,68,0.6);border-radius:3px;box-shadow:inset 0 -1px 0 rgba(68,68,68,0.6)"></div>
<div class="t" style="left:933.5px;width:22px;text-align:center;top:139.77px;font-size:11.5px;color:#cccccc">F5</div>
<div class="t" style="left:923.0px;top:139.0px;font-size:13px;color:#cccccc;font-weight:400;font-family:'Liberation Sans';">+</div>
<div class="a" style="left:886.5px;top:136px;width:33.5px;height:17.5px;background:rgba(128,128,128,0.17);border:1px solid rgba(51,51,51,0.6);border-bottom-color:rgba(68,68,68,0.6);border-radius:3px;box-shadow:inset 0 -1px 0 rgba(68,68,68,0.6)"></div>
<div class="t" style="left:886.5px;width:33.5px;text-align:center;top:139.77px;font-size:11.5px;color:#cccccc">Shift</div>
<div class="t" style="left:876.0px;top:139.0px;font-size:13px;color:#cccccc;font-weight:400;font-family:'Liberation Sans';">+</div>
<div class="a" style="left:844.5px;top:136px;width:28.5px;height:17.5px;background:rgba(128,128,128,0.17);border:1px solid rgba(51,51,51,0.6);border-bottom-color:rgba(68,68,68,0.6);border-radius:3px;box-shadow:inset 0 -1px 0 rgba(68,68,68,0.6)"></div>
<div class="t" style="left:844.5px;width:28.5px;text-align:center;top:139.77px;font-size:11.5px;color:#cccccc">Ctrl</div>
<div class="t" style="left:394.7px;top:161.0px;font-size:13px;color:#cccccc;font-weight:400;font-family:'Liberation Sans';letter-spacing:-0.6px"><b style="color:#2aaaff">AL:</b></div>
<div class="t" style="left:418.5px;top:161.0px;font-size:13px;color:#cccccc;font-weight:400;font-family:'Liberation Sans';letter-spacing:-0.087px">Download source code</div>
<div class="a" style="left:933.5px;top:158px;width:22px;height:17.5px;background:rgba(128,128,128,0.17);border:1px solid rgba(51,51,51,0.6);border-bottom-color:rgba(68,68,68,0.6);border-radius:3px;box-shadow:inset 0 -1px 0 rgba(68,68,68,0.6)"></div>
<div class="t" style="left:933.5px;width:22px;text-align:center;top:161.77px;font-size:11.5px;color:#cccccc">F6</div>
<div class="t" style="left:923.0px;top:161.0px;font-size:13px;color:#cccccc;font-weight:400;font-family:'Liberation Sans';">+</div>
<div class="a" style="left:895.5px;top:158px;width:24.5px;height:17.5px;background:rgba(128,128,128,0.17);border:1px solid rgba(51,51,51,0.6);border-bottom-color:rgba(68,68,68,0.6);border-radius:3px;box-shadow:inset 0 -1px 0 rgba(68,68,68,0.6)"></div>
<div class="t" style="left:895.5px;width:24.5px;text-align:center;top:161.77px;font-size:11.5px;color:#cccccc">Alt</div>
<div class="t" style="left:394.7px;top:183.0px;font-size:13px;color:#cccccc;font-weight:400;font-family:'Liberation Sans';letter-spacing:-0.6px"><b style="color:#2aaaff">AL:</b></div>
<div class="t" style="left:418.5px;top:183.0px;font-size:13px;color:#cccccc;font-weight:400;font-family:'Liberation Sans';letter-spacing:-0.057px">Download symbols</div>
<div class="t" style="left:394.7px;top:205.0px;font-size:13px;color:#cccccc;font-weight:400;font-family:'Liberation Sans';letter-spacing:-0.6px"><b style="color:#2aaaff">AL:</b></div>
<div class="t" style="left:418.5px;top:205.0px;font-size:13px;color:#cccccc;font-weight:400;font-family:'Liberation Sans';letter-spacing:-0.303px">Explorer</div>
<div class="a" style="left:927.5px;top:202px;width:28px;height:17.5px;background:rgba(128,128,128,0.17);border:1px solid rgba(51,51,51,0.6);border-bottom-color:rgba(68,68,68,0.6);border-radius:3px;box-shadow:inset 0 -1px 0 rgba(68,68,68,0.6)"></div>
<div class="t" style="left:927.5px;width:28px;text-align:center;top:205.77px;font-size:11.5px;color:#cccccc">F12</div>
<div class="t" style="left:917.0px;top:205.0px;font-size:13px;color:#cccccc;font-weight:400;font-family:'Liberation Sans';">+</div>
<div class="a" style="left:880.5px;top:202px;width:33.5px;height:17.5px;background:rgba(128,128,128,0.17);border:1px solid rgba(51,51,51,0.6);border-bottom-color:rgba(68,68,68,0.6);border-radius:3px;box-shadow:inset 0 -1px 0 rgba(68,68,68,0.6)"></div>
<div class="t" style="left:880.5px;width:33.5px;text-align:center;top:205.77px;font-size:11.5px;color:#cccccc">Shift</div>
<div class="t" style="left:870.0px;top:205.0px;font-size:13px;color:#cccccc;font-weight:400;font-family:'Liberation Sans';">+</div>
<div class="a" style="left:838.5px;top:202px;width:28.5px;height:17.5px;background:rgba(128,128,128,0.17);border:1px solid rgba(51,51,51,0.6);border-bottom-color:rgba(68,68,68,0.6);border-radius:3px;box-shadow:inset 0 -1px 0 rgba(68,68,68,0.6)"></div>
<div class="t" style="left:838.5px;width:28.5px;text-align:center;top:205.77px;font-size:11.5px;color:#cccccc">Ctrl</div>
<div class="t" style="left:394.7px;top:227.0px;font-size:13px;color:#cccccc;font-weight:400;font-family:'Liberation Sans';letter-spacing:-0.6px"><b style="color:#2aaaff">AL:</b></div>
<div class="t" style="left:418.5px;top:227.0px;font-size:13px;color:#cccccc;font-weight:400;font-family:'Liberation Sans';letter-spacing:-0.356px">Find Event</div>
<div class="a" style="left:938.5px;top:224px;width:17px;height:17.5px;background:rgba(128,128,128,0.17);border:1px solid rgba(51,51,51,0.6);border-bottom-color:rgba(68,68,68,0.6);border-radius:3px;box-shadow:inset 0 -1px 0 rgba(68,68,68,0.6)"></div>
<div class="t" style="left:938.5px;width:17px;text-align:center;top:227.77px;font-size:11.5px;color:#cccccc">E</div>
<div class="t" style="left:928.0px;top:227.0px;font-size:13px;color:#cccccc;font-weight:400;font-family:'Liberation Sans';">+</div>
<div class="a" style="left:900.5px;top:224px;width:24.5px;height:17.5px;background:rgba(128,128,128,0.17);border:1px solid rgba(51,51,51,0.6);border-bottom-color:rgba(68,68,68,0.6);border-radius:3px;box-shadow:inset 0 -1px 0 rgba(68,68,68,0.6)"></div>
<div class="t" style="left:900.5px;width:24.5px;text-align:center;top:227.77px;font-size:11.5px;color:#cccccc">Alt</div>
<div class="t" style="left:890.0px;top:227.0px;font-size:13px;color:#cccccc;font-weight:400;font-family:'Liberation Sans';">+</div>
<div class="a" style="left:853.5px;top:224px;width:33.5px;height:17.5px;background:rgba(128,128,128,0.17);border:1px solid rgba(51,51,51,0.6);border-bottom-color:rgba(68,68,68,0.6);border-radius:3px;box-shadow:inset 0 -1px 0 rgba(68,68,68,0.6)"></div>
<div class="t" style="left:853.5px;width:33.5px;text-align:center;top:227.77px;font-size:11.5px;color:#cccccc">Shift</div>
<div class="t" style="left:394.7px;top:249.0px;font-size:13px;color:#cccccc;font-weight:400;font-family:'Liberation Sans';letter-spacing:-0.6px"><b style="color:#2aaaff">AL:</b></div>
<div class="t" style="left:418.5px;top:249.0px;font-size:13px;color:#cccccc;font-weight:400;font-family:'Liberation Sans';letter-spacing:-0.054px">Finish snapshot debugging on the server</div>
<div class="a" style="left:933.5px;top:246px;width:22px;height:17.5px;background:rgba(128,128,128,0.17);border:1px solid rgba(51,51,51,0.6);border-bottom-color:rgba(68,68,68,0.6);border-radius:3px;box-shadow:inset 0 -1px 0 rgba(68,68,68,0.6)"></div>
<div class="t" style="left:933.5px;width:22px;text-align:center;top:249.77px;font-size:11.5px;color:#cccccc">F7</div>
<div class="t" style="left:923.0px;top:249.0px;font-size:13px;color:#cccccc;font-weight:400;font-family:'Liberation Sans';">+</div>
<div class="a" style="left:895.5px;top:246px;width:24.5px;height:17.5px;background:rgba(128,128,128,0.17);border:1px solid rgba(51,51,51,0.6);border-bottom-color:rgba(68,68,68,0.6);border-radius:3px;box-shadow:inset 0 -1px 0 rgba(68,68,68,0.6)"></div>
<div class="t" style="left:895.5px;width:24.5px;text-align:center;top:249.77px;font-size:11.5px;color:#cccccc">Alt</div>
<div class="t" style="left:394.7px;top:271.0px;font-size:13px;color:#cccccc;font-weight:400;font-family:'Liberation Sans';letter-spacing:-0.6px"><b style="color:#2aaaff">AL:</b></div>
<div class="t" style="left:418.5px;top:271.0px;font-size:13px;color:#cccccc;font-weight:400;font-family:'Liberation Sans';letter-spacing:-0.168px">Generate manifest</div>
<div class="t" style="left:394.7px;top:293.0px;font-size:13px;color:#cccccc;font-weight:400;font-family:'Liberation Sans';letter-spacing:-0.6px"><b style="color:#2aaaff">AL:</b></div>
<div class="t" style="left:418.5px;top:293.0px;font-size:13px;color:#cccccc;font-weight:400;font-family:'Liberation Sans';letter-spacing:-0.06px">Generate permission set as AL object containing current extension objects</div>
<div class="t" style="left:394.7px;top:315.0px;font-size:13px;color:#cccccc;font-weight:400;font-family:'Liberation Sans';letter-spacing:-0.6px"><b style="color:#2aaaff">AL:</b></div>
<div class="t" style="left:418.5px;top:315.0px;font-size:13px;color:#cccccc;font-weight:400;font-family:'Liberation Sans';letter-spacing:-0.06px">Generate permission set as XML file containing current extension objects</div>
</div></div>
<svg style="left:942px;top:181px;" width="16" height="16" viewBox="0 0 16 16"><path d="M12.07 6.60 L14.16 6.69 L14.16 9.31 L12.07 9.40 L11.86 9.88 L13.28 11.43 L11.43 13.28 L9.88 11.86 L9.40 12.07 L9.31 14.16 L6.69 14.16 L6.60 12.07 L6.12 11.86 L4.57 13.28 L2.72 11.43 L4.14 9.88 L3.93 9.40 L1.84 9.31 L1.84 6.69 L3.93 6.60 L4.14 6.12 L2.72 4.57 L4.57 2.72 L6.12 4.14 L6.60 3.93 L6.69 1.84 L9.31 1.84 L9.40 3.93 L9.88 4.14 L11.43 2.72 L13.28 4.57 L11.86 6.12 Z" fill="none" stroke="#ffffff" stroke-width="1.2" stroke-linejoin="round"/><circle cx="8" cy="8" r="1.7" fill="none" stroke="#ffffff" stroke-width="1.1"/></svg>
</body></html>
